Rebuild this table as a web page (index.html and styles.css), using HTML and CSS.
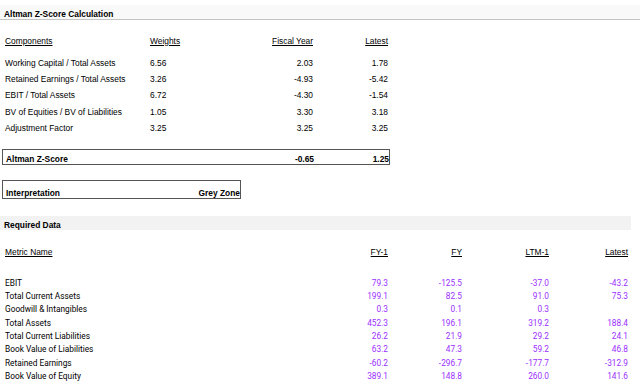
FILE: index.html
```html
<!DOCTYPE html>
<html>
<head>
<meta charset="utf-8">
<link rel="stylesheet" href="styles.css">
</head>
<body>
<div class="page">
  <div class="bar bar-top">Altman Z-Score Calculation</div>

  <div class="grid comp head">
    <div class="lbl u">Components</div>
    <div class="w u">Weights</div>
    <div class="num u">Fiscal Year</div>
    <div class="num u">Latest</div>
  </div>
  <div class="grid comp rows">
    <div class="lbl">Working Capital / Total Assets</div><div class="w">6.56</div><div class="num">2.03</div><div class="num">1.78</div>
    <div class="lbl">Retained Earnings / Total Assets</div><div class="w">3.26</div><div class="num">-4.93</div><div class="num">-5.42</div>
    <div class="lbl">EBIT / Total Assets</div><div class="w">6.72</div><div class="num">-4.30</div><div class="num">-1.54</div>
    <div class="lbl">BV of Equities / BV of Liabilities</div><div class="w">1.05</div><div class="num">3.30</div><div class="num">3.18</div>
    <div class="lbl">Adjustment Factor</div><div class="w">3.25</div><div class="num">3.25</div><div class="num">3.25</div>
  </div>

  <div class="box zbox">
    <div class="lbl">Altman Z-Score</div><div></div><div class="num">-0.65</div><div class="num">1.25</div>
  </div>

  <div class="box ibox">
    <div class="lbl">Interpretation</div><div class="num">Grey Zone</div>
  </div>

  <div class="bar bar-req">Required Data</div>

  <div class="grid data head2">
    <div class="lbl u">Metric Name</div>
    <div class="num u">FY-1</div>
    <div class="num u">FY</div>
    <div class="num u">LTM-1</div>
    <div class="num u">Latest</div>
  </div>
  <div class="grid data drows">
    <div class="lbl">EBIT</div><div class="num v">79.3</div><div class="num v">-125.5</div><div class="num v">-37.0</div><div class="num v">-43.2</div>
    <div class="lbl">Total Current Assets</div><div class="num v">199.1</div><div class="num v">82.5</div><div class="num v">91.0</div><div class="num v">75.3</div>
    <div class="lbl">Goodwill &amp; Intangibles</div><div class="num v">0.3</div><div class="num v">0.1</div><div class="num v">0.3</div><div class="num v"></div>
    <div class="lbl">Total Assets</div><div class="num v">452.3</div><div class="num v">196.1</div><div class="num v">319.2</div><div class="num v">188.4</div>
    <div class="lbl">Total Current Liabilities</div><div class="num v">26.2</div><div class="num v">21.9</div><div class="num v">29.2</div><div class="num v">24.1</div>
    <div class="lbl">Book Value of Liabilities</div><div class="num v">63.2</div><div class="num v">47.3</div><div class="num v">59.2</div><div class="num v">46.8</div>
    <div class="lbl">Retained Earnings</div><div class="num v">-60.2</div><div class="num v">-296.7</div><div class="num v">-177.7</div><div class="num v">-312.9</div>
    <div class="lbl">Book Value of Equity</div><div class="num v">389.1</div><div class="num v">148.8</div><div class="num v">260.0</div><div class="num v">141.6</div>
  </div>
</div>
</body>
</html>
```
FILE: styles.css
```css
html, body {
  margin: 0;
  padding: 0;
  background: #fff;
}
body {
  font-family: "Liberation Sans", Arial, sans-serif;
  font-size: 8.4px;
  color: #000;
  width: 640px;
  height: 382px;
  overflow: hidden;
}
.page {
  display: flex;
  flex-direction: column;
}
.bar {
  font-weight: bold;
  padding-left: 4px;
  height: 14px;
  overflow: hidden;
}
.bar-top {
  margin-top: 5px;
  line-height: 18px;
  background: #f9f9f9;
  border-bottom: 1px solid #c4c4c4;
}
.bar-req {
  margin-top: 17px;
  width: 627px;
  line-height: 19px;
  background: #f2f2f2;
}
.u {
  text-decoration: underline;
  text-underline-offset: 1px;
}
.grid {
  display: grid;
}
.comp {
  grid-template-columns: 150px 90px 73px 75px;
  line-height: 16.3px;
}
.lbl {
  padding-left: 5px;
}
.num {
  text-align: right;
}
.head {
  margin-top: 13px;
}
.rows {
  margin-top: 5.5px;
}
.box {
  display: grid;
  margin-left: 2px;
  border: 1px solid #555;
  font-weight: bold;
}
.zbox {
  margin-top: 13px;
  width: 386px;
  grid-template-columns: 148px 90px 73px 75px;
  height: 14px;
  line-height: 18px;
}
.zbox .lbl, .ibox .lbl {
  padding-left: 3px;
}
.ibox {
  margin-top: 15px;
  width: 237px;
  height: 17px;
  line-height: 25px;
  grid-template-columns: 1fr auto;
}
.data {
  grid-template-columns: 300px 88px 74px 87px 79px;
}
.head2 {
  margin-top: 16px;
  line-height: 13.3px;
}
.drows {
  margin-top: 17px;
  line-height: 13.35px;
}
.drows .lbl, .drows .v {
  font-family: Roboto, "Liberation Sans", sans-serif;
  font-size: 8.3px;
}
.v {
  color: #9b30ff;
}
```
